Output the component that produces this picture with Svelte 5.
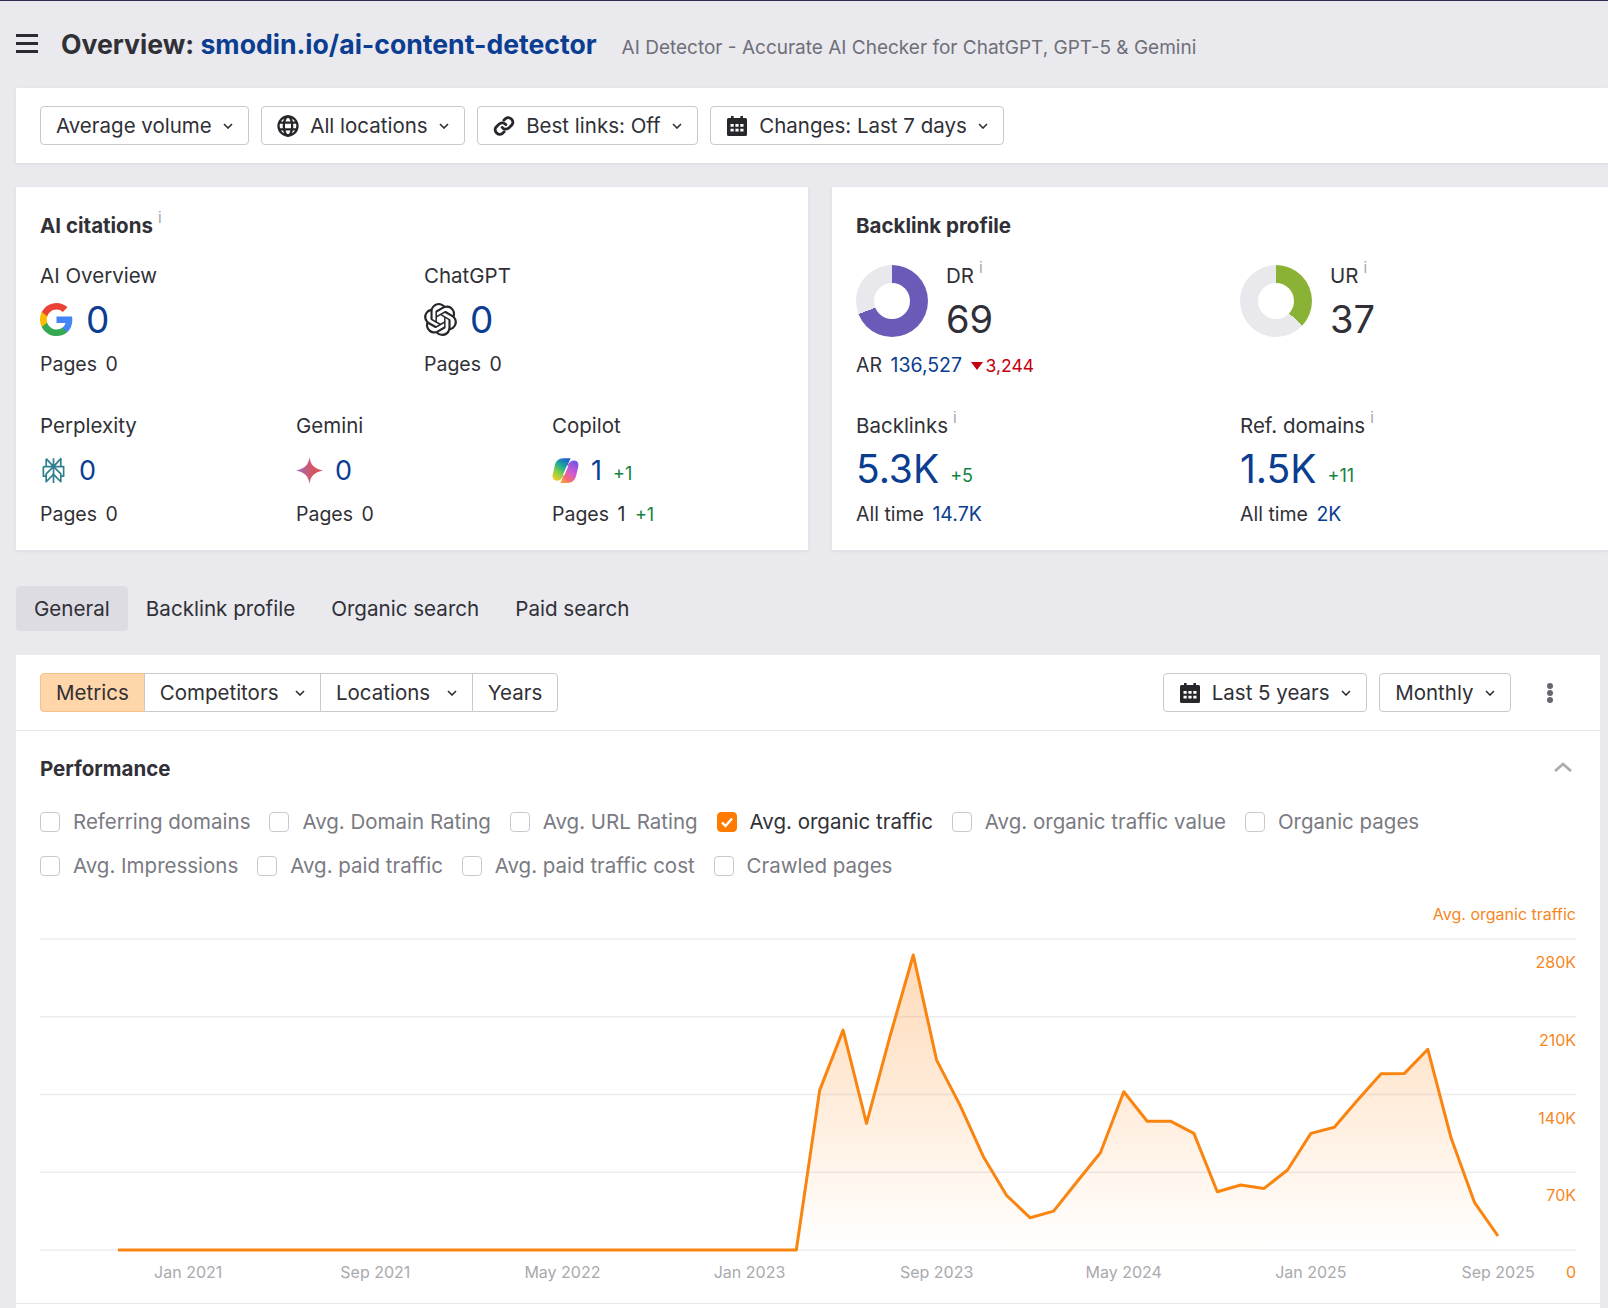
<script>
    const filters = [
        { label: 'Average volume' },
        { label: 'All locations', icon: 'globe' },
        { label: 'Best links: Off', icon: 'link' },
        { label: 'Changes: Last 7 days', icon: 'calendar' }
    ];
    const tabs = ['General', 'Backlink profile', 'Organic search', 'Paid search'];
    const segments = [
        { label: 'Metrics', active: true },
        { label: 'Competitors', menu: true },
        { label: 'Locations', menu: true },
        { label: 'Years' }
    ];
    const metrics = [
        { label: 'Referring domains' },
        { label: 'Avg. Domain Rating' },
        { label: 'Avg. URL Rating' },
        { label: 'Avg. organic traffic', checked: true },
        { label: 'Avg. organic traffic value' },
        { label: 'Organic pages' },
        { label: 'Avg. Impressions' },
        { label: 'Avg. paid traffic' },
        { label: 'Avg. paid traffic cost' },
        { label: 'Crawled pages' }
    ];

    // monthly traffic in thousands, Oct 2020 - Sep 2025
    const traffic = [
        ...Array(30).fill(0),
        144, 198, 114, 192, 265.6, 171, 130.5, 84, 48.9, 29,
        35, 61.5, 87.6, 142.5, 116, 116, 105, 52.5, 58.5, 55.5,
        72, 105, 110.5, 135, 158.7, 159, 180.7, 100.6, 42.6, 12.6
    ];
    const chartW = 1536;
    const chartH = 390;
    const baseY = 350;
    const stepY = 77.75;
    const startX = 78;
    const stepX = 23.39;
    const px = (i) => startX + i * stepX;
    const py = (v) => baseY - (v / 70) * stepY;
    const linePath = traffic.map((v, i) => `${i ? 'L' : 'M'}${px(i).toFixed(1)} ${py(v).toFixed(1)}`).join(' ');
    const areaPath = `${linePath} L${px(traffic.length - 1).toFixed(1)} ${baseY} L${startX} ${baseY} Z`;
    const ticks = [
        { v: 280, label: '280K' },
        { v: 210, label: '210K' },
        { v: 140, label: '140K' },
        { v: 70, label: '70K' }
    ];
    const months = [
        { i: 3, label: 'Jan 2021' },
        { i: 11, label: 'Sep 2021' },
        { i: 19, label: 'May 2022' },
        { i: 27, label: 'Jan 2023' },
        { i: 35, label: 'Sep 2023' },
        { i: 43, label: 'May 2024' },
        { i: 51, label: 'Jan 2025' },
        { i: 59, label: 'Sep 2025' }
    ];

    const donut = (pct) => `conic-gradient(var(--c) 0 ${pct}%, #e8e8ed ${pct}% 100%)`;
</script>

{#snippet chevron()}
    <svg class="chev" viewBox="0 0 10 6" width="10" height="6" fill="none" stroke="#303036" stroke-width="1.6">
        <path d="M1 1l4 4 4-4" />
    </svg>
{/snippet}

{#snippet calendarIcon()}
    <svg class="ico" viewBox="0 0 22 22" width="22" height="22">
        <path fill="#26262b" d="M5 1h2.600v2h6.800V1H17v2h2.500A1.500 1.500 0 0 1 21 4.500v15a1.500 1.500 0 0 1-1.500 1.500h-17A1.500 1.500 0 0 1 1 19.500v-15A1.500 1.500 0 0 1 2.500 3H5z" />
        <path fill="#fff" d="M4.500 9h3.200v2.800H4.500zM9.400 9h3.200v2.800H9.400zM14.300 9h3.200v2.800h-3.200zM4.500 13.800h3.200v2.800H4.500zM9.400 13.800h3.200v2.800H9.400zM14.300 13.800h3.200v2.800h-3.200z" />
    </svg>
{/snippet}

{#snippet globeIcon()}
    <svg class="ico" viewBox="0 0 22 22" width="22" height="22" fill="none" stroke="#26262b" stroke-width="2.300">
        <circle cx="11" cy="11" r="9.500" />
        <ellipse cx="11" cy="11" rx="4.200" ry="9.500" />
        <path d="M2 7.600h18M2 14.400h18" />
    </svg>
{/snippet}

{#snippet linkIcon()}
    <svg class="ico" viewBox="0 0 24 24" width="22" height="22" fill="none" stroke="#26262b" stroke-width="3" stroke-linecap="round">
        <path d="M10 13.500a5 5 0 0 0 7.500.5l3-3a5 5 0 0 0-7-7l-1.700 1.700" />
        <path d="M14 10.500a5 5 0 0 0-7.500-.5l-3 3a5 5 0 0 0 7 7l1.700-1.700" />
    </svg>
{/snippet}

{#snippet googleIcon()}
    <svg viewBox="1 1 22 22" width="33" height="33">
        <path fill="#4285F4" d="M22.56 12.25c0-.78-.07-1.53-.2-2.25H12v4.26h5.92c-.26 1.37-1.04 2.53-2.21 3.31v2.77h3.57c2.08-1.92 3.28-4.74 3.28-8.09z" />
        <path fill="#34A853" d="M12 23c2.97 0 5.46-.98 7.28-2.66l-3.57-2.77c-.98.66-2.23 1.06-3.71 1.06-2.86 0-5.29-1.93-6.16-4.53H2.18v2.84C3.99 20.53 7.7 23 12 23z" />
        <path fill="#FBBC05" d="M5.84 14.09c-.22-.66-.35-1.36-.35-2.09s.13-1.43.35-2.09V7.07H2.18C1.43 8.55 1 10.22 1 12s.43 3.45 1.18 4.93l2.85-2.22.81-.62z" />
        <path fill="#EA4335" d="M12 5.38c1.62 0 3.06.56 4.21 1.64l3.15-3.15C17.45 2.09 14.97 1 12 1 7.7 1 3.99 3.47 2.18 7.07l3.66 2.84c.87-2.6 3.3-4.53 6.16-4.53z" />
    </svg>
{/snippet}

{#snippet openaiIcon()}
    <svg viewBox="0 0 24 24" width="33" height="33">
        <path fill="#26262b" d="M22.2819 9.8211a5.9847 5.9847 0 0 0-.5157-4.9108 6.0462 6.0462 0 0 0-6.5098-2.9A6.0651 6.0651 0 0 0 4.9807 4.1818a5.9847 5.9847 0 0 0-3.9977 2.9 6.0462 6.0462 0 0 0 .7427 7.0966 5.98 5.98 0 0 0 .511 4.9107 6.051 6.051 0 0 0 6.5146 2.9001A5.9847 5.9847 0 0 0 13.2599 24a6.0557 6.0557 0 0 0 5.7718-4.2058 5.9894 5.9894 0 0 0 3.9977-2.9001 6.0557 6.0557 0 0 0-.7475-7.0729zm-9.022 12.6081a4.4755 4.4755 0 0 1-2.8764-1.0408l.1419-.0804 4.7783-2.7582a.7948.7948 0 0 0 .3927-.6813v-6.7369l2.02 1.1686a.071.071 0 0 1 .038.052v5.5826a4.504 4.504 0 0 1-4.4945 4.4944zm-9.6607-4.1254a4.4708 4.4708 0 0 1-.5346-3.0137l.142.0852 4.783 2.7582a.7712.7712 0 0 0 .7806 0l5.8428-3.3685v2.3324a.0804.0804 0 0 1-.0332.0615L9.74 19.9502a4.4992 4.4992 0 0 1-6.1408-1.6464zM2.3408 7.8956a4.485 4.485 0 0 1 2.3655-1.9728V11.6a.7664.7664 0 0 0 .3879.6765l5.8144 3.3543-2.0201 1.1685a.0757.0757 0 0 1-.071 0l-4.8303-2.7865A4.504 4.504 0 0 1 2.3408 7.872zm16.5963 3.8558L13.1038 8.364 15.1192 7.2a.0757.0757 0 0 1 .071 0l4.8303 2.7913a4.4944 4.4944 0 0 1-.6765 8.1042v-5.6772a.79.79 0 0 0-.407-.667zm2.0107-3.0231l-.142-.0852-4.7735-2.7818a.7759.7759 0 0 0-.7854 0L9.409 9.2297V6.8974a.0662.0662 0 0 1 .0284-.0615l4.8303-2.7866a4.4992 4.4992 0 0 1 6.6802 4.66zM8.3065 12.863l-2.02-1.1638a.0804.0804 0 0 1-.038-.0567V6.0742a4.4992 4.4992 0 0 1 7.3757-3.4537l-.142.0805L8.704 5.459a.7948.7948 0 0 0-.3927.6813zm1.0976-2.3654l2.602-1.4998 2.6069 1.4998v2.9994l-2.5974 1.4997-2.6067-1.4997Z" />
    </svg>
{/snippet}

{#snippet perplexityIcon()}
    <svg viewBox="0 0 24 24" width="27" height="27" fill="none" stroke="#2f7f8e" stroke-width="1.500" stroke-linejoin="round">
        <path d="M12 1v22M5.500 1.500L12 8.500l6.500-7v7M5.500 1.500v7M3 8.500h18v8.500h-2.500M3 8.500v8.500h2.500" />
        <path d="M12 8.500L5.500 15v7l6.500-6.500 6.500 6.500v-7z" />
    </svg>
{/snippet}

{#snippet geminiIcon()}
    <svg viewBox="0 0 24 24" width="27" height="27">
        <defs>
            <linearGradient id="gem" x1="0" y1="0" x2="1" y2="0">
                <stop offset="0" stop-color="#9a6cc4" />
                <stop offset=".55" stop-color="#d0586a" />
                <stop offset="1" stop-color="#dd5048" />
            </linearGradient>
        </defs>
        <path fill="url(#gem)" d="M12 0c.6 6.500 4.500 10.800 12 12-7.500 1.200-11.400 5.500-12 12-.6-6.500-4.500-10.800-12-12 7.500-1.200 11.400-5.500 12-12z" />
    </svg>
{/snippet}

{#snippet copilotIcon()}
    <svg viewBox="0 0 24 24" width="27" height="27">
        <defs>
            <linearGradient id="copA" x1=".75" y1="0" x2=".2" y2="1">
                <stop offset="0" stop-color="#1a5fd8" />
                <stop offset=".4" stop-color="#23b08f" />
                <stop offset=".7" stop-color="#8fd13f" />
                <stop offset="1" stop-color="#f6c92e" />
            </linearGradient>
            <linearGradient id="copB" x1=".8" y1="0" x2=".25" y2="1">
                <stop offset="0" stop-color="#6d56e6" />
                <stop offset=".5" stop-color="#d35ad0" />
                <stop offset=".8" stop-color="#f2697a" />
                <stop offset="1" stop-color="#fb9a3c" />
            </linearGradient>
        </defs>
        <path fill="url(#copA)" d="M10 1h6.500L9.500 17.500C8.500 20 6.500 21 4.500 21 1.500 21 0 18.500.6 15.500L2.500 7.500C3.300 3.500 6 1 10 1z" />
        <path fill="url(#copB)" d="M14 23H7.500L14.500 6.500C15.500 4 17.500 3 19.500 3c3 0 4.500 2.500 3.900 5.500L21.500 16.500C20.700 20.500 18 23 14 23z" />
        <path stroke="#fff" stroke-width="1.300" d="M13.800 8l-3.400 8" />
    </svg>
{/snippet}

<div class="page">
    <header class="top">
        <svg class="burger" viewBox="0 0 22 19" width="22" height="19" fill="#2a2a30">
            <rect width="22" height="3" />
            <rect y="8" width="22" height="3" />
            <rect y="16" width="22" height="3" />
        </svg>
        <div class="heading">
            <h1>Overview: <a href="#top">smodin.io/ai-content-detector</a></h1>
            <span class="sub">AI Detector - Accurate AI Checker for ChatGPT, GPT-5 &amp; Gemini</span>
        </div>
    </header>

    <section class="filters">
        {#each filters as f}
            <button class="btn">
                {#if f.icon === 'globe'}{@render globeIcon()}{/if}
                {#if f.icon === 'link'}{@render linkIcon()}{/if}
                {#if f.icon === 'calendar'}{@render calendarIcon()}{/if}
                <span>{f.label}</span>
                {@render chevron()}
            </button>
        {/each}
    </section>

    <section class="cards">
        <div class="card citations">
            <h2>AI citations<span class="info">i</span></h2>
            <div class="grid big">
                <div class="stat wide">
                    <div class="lbl">AI Overview</div>
                    <div class="val big-val">{@render googleIcon()}<b>0</b></div>
                    <div class="foot">Pages <span class="n">0</span></div>
                </div>
                <div class="stat wide">
                    <div class="lbl">ChatGPT</div>
                    <div class="val big-val">{@render openaiIcon()}<b>0</b></div>
                    <div class="foot">Pages <span class="n">0</span></div>
                </div>
            </div>
            <div class="grid small">
                <div class="stat third">
                    <div class="lbl">Perplexity</div>
                    <div class="val small-val">{@render perplexityIcon()}<b>0</b></div>
                    <div class="foot">Pages <span class="n">0</span></div>
                </div>
                <div class="stat third">
                    <div class="lbl">Gemini</div>
                    <div class="val small-val">{@render geminiIcon()}<b>0</b></div>
                    <div class="foot">Pages <span class="n">0</span></div>
                </div>
                <div class="stat third">
                    <div class="lbl">Copilot</div>
                    <div class="val small-val">{@render copilotIcon()}<b>1</b><span class="up">+1</span></div>
                    <div class="foot">Pages <span class="n">1</span> <span class="up plain">+1</span></div>
                </div>
            </div>
        </div>

        <div class="card backlinks">
            <h2>Backlink profile</h2>
            <div class="pair top-pair">
                <div class="rating-col">
                    <div class="rating">
                        <div class="donut" style="--c:#6b5ab8; background:{donut(69)}"></div>
                        <div>
                            <div class="lbl">DR<span class="info">i</span></div>
                            <div class="score">69</div>
                        </div>
                    </div>
                    <div class="foot ar">AR <a href="#top">136,527</a> <span class="tri"></span><span class="down">3,244</span></div>
                </div>
                <div class="rating-col">
                    <div class="rating">
                        <div class="donut" style="--c:#8ab235; background:{donut(37)}"></div>
                        <div>
                            <div class="lbl">UR<span class="info">i</span></div>
                            <div class="score">37</div>
                        </div>
                    </div>
                </div>
            </div>
            <div class="pair">
                <div class="stat">
                    <div class="lbl">Backlinks<span class="info">i</span></div>
                    <div class="val link-val"><b>5.3K</b><span class="up">+5</span></div>
                    <div class="foot">All time <a href="#top">14.7K</a></div>
                </div>
                <div class="stat">
                    <div class="lbl">Ref. domains<span class="info">i</span></div>
                    <div class="val link-val"><b>1.5K</b><span class="up">+11</span></div>
                    <div class="foot">All time <a href="#top">2K</a></div>
                </div>
            </div>
        </div>
    </section>

    <nav class="tabs">
        {#each tabs as t, i}
            <button class="tab" class:current={i === 0}>{t}</button>
        {/each}
    </nav>

    <section class="panel">
        <div class="panel-bar">
            <div class="segs">
                {#each segments as s}
                    <button class="seg" class:on={s.active}>
                        <span>{s.label}</span>
                        {#if s.menu}{@render chevron()}{/if}
                    </button>
                {/each}
            </div>
            <div class="bar-right">
                <button class="btn">{@render calendarIcon()}<span>Last 5 years</span>{@render chevron()}</button>
                <button class="btn"><span>Monthly</span>{@render chevron()}</button>
                <svg class="dots" viewBox="0 0 6 20" width="6" height="20" fill="#66666e">
                    <circle cx="3" cy="3" r="3" />
                    <circle cx="3" cy="10" r="3" />
                    <circle cx="3" cy="17" r="3" />
                </svg>
            </div>
        </div>

        <div class="perf">
            <div class="perf-head">
                <h2>Performance</h2>
                <svg viewBox="0 0 18 10" width="18" height="10" fill="none" stroke="#ababb0" stroke-width="2.800">
                    <path d="M1 9l8-7 8 7" />
                </svg>
            </div>
            <div class="checks">
                {#each metrics as m}
                    <label class="check" class:picked={m.checked}>
                        <span class="box">
                            {#if m.checked}
                                <svg viewBox="0 0 20 20" width="20" height="20" fill="none" stroke="#fff" stroke-width="2.400">
                                    <path d="M5 10.500l3.500 3.500L15 6.500" />
                                </svg>
                            {/if}
                        </span>
                        {m.label}
                    </label>
                {/each}
            </div>
            <svg class="chart" viewBox="0 0 {chartW} {chartH}" width={chartW} height={chartH}>
                <defs>
                    <linearGradient id="area" x1="0" y1="0" x2="0" y2="1">
                        <stop offset="0" stop-color="#ff8a1f" stop-opacity=".32" />
                        <stop offset="1" stop-color="#ff8a1f" stop-opacity="0" />
                    </linearGradient>
                </defs>
                <text class="axis-y" x={chartW} y="20">Avg. organic traffic</text>
                {#each ticks as t}
                    <line class="grid-line" x1="0" x2={chartW} y1={py(t.v)} y2={py(t.v)} />
                {/each}
                <line class="grid-line" x1="0" x2={chartW} y1={baseY} y2={baseY} />
                {#each ticks as t}
                    <text class="axis-y" x={chartW} y={py(t.v) + 29}>{t.label}</text>
                {/each}
                <path d={areaPath} fill="url(#area)" />
                <path d={linePath} fill="none" stroke="#f98510" stroke-width="3" stroke-linejoin="round" />
                {#each months as m}
                    <text class="axis-x" x={px(m.i)} y="378" text-anchor="middle">{m.label}</text>
                {/each}
                <text class="axis-y" x={chartW} y="378">0</text>
            </svg>
            <div class="foot-rule"></div>
        </div>
    </section>
</div>

<style>
    :global(body) {
        margin: 0;
        background: #e9e9ee;
    }

    .page {
        min-height: 100vh;
        box-sizing: border-box;
        border-top: 1px solid #2d2b50;
        padding-left: 16px;
        font-family: Inter, "Liberation Sans", sans-serif;
        font-size: 20.5px;
        color: #303036;
        overflow: hidden;
    }

    a {
        color: #0b3d91;
        text-decoration: none;
    }

    button {
        font: inherit;
        color: inherit;
    }

    .top {
        display: flex;
        align-items: center;
        gap: 23px;
        height: 87px;
        box-sizing: border-box;
        padding-bottom: 2px;
    }

    .burger {
        flex: none;
    }

    .heading {
        display: flex;
        align-items: baseline;
        gap: 25px;
    }

    h1 {
        margin: 0;
        font-size: 26.6px;
        font-weight: 700;
    }

    .sub {
        font-size: 19px;
        color: #6f6f78;
    }

    .filters {
        display: flex;
        gap: 12px;
        padding: 18px 24px;
        background: #fff;
        box-shadow: 0 1px 3px rgba(40, 40, 60, 0.08);
    }

    .btn {
        display: flex;
        align-items: center;
        gap: 11px;
        height: 39px;
        box-sizing: border-box;
        padding: 0 15px;
        background: #fff;
        border: 1px solid #c9c9ce;
        border-radius: 4px;
    }

    .chev {
        margin-left: 0.5px;
    }

    .ico {
        flex: none;
    }

    .cards {
        display: flex;
        gap: 24px;
        margin-top: 24px;
    }

    .card {
        box-sizing: border-box;
        height: 363px;
        padding: 25px 0 0 24px;
        background: #fff;
        box-shadow: 0 1px 3px rgba(40, 40, 60, 0.08);
    }

    .citations {
        width: 792px;
        flex: none;
    }

    .backlinks {
        flex: 1;
    }

    h2 {
        margin: 0;
        font-size: 20.5px;
        font-weight: 700;
        line-height: 28px;
    }

    .info {
        margin-left: 5px;
        font-size: 15px;
        font-weight: 400;
        line-height: 0;
        vertical-align: 10px;
        color: #a5a5aa;
    }

    .grid {
        display: grid;
        grid-template-columns: repeat(6, 128px);
    }

    .grid.big {
        margin-top: 22px;
    }

    .grid.small {
        margin-top: 34px;
    }

    .wide {
        grid-column: span 3;
    }

    .third {
        grid-column: span 2;
    }

    .lbl,
    .foot {
        line-height: 28px;
        white-space: nowrap;
    }

    .foot {
        font-size: 19.5px;
    }

    .foot .n,
    .foot a {
        margin-left: 3px;
    }

    .val {
        display: flex;
        align-items: center;
    }

    .val b {
        font-weight: 400;
        color: #0b3d91;
    }

    .big-val {
        gap: 13px;
        height: 44px;
        margin: 7px 0 9px;
        font-size: 37px;
    }

    .small-val {
        gap: 12px;
        height: 38px;
        margin: 11px 0;
        font-size: 27px;
    }

    .up {
        margin-left: -1px;
        font-size: 18px;
        color: #12823f;
        position: relative;
        top: 3px;
    }

    .up.plain {
        margin-left: 4px;
        top: 0;
    }

    .pair {
        display: grid;
        grid-template-columns: 384px 1fr;
    }

    .top-pair {
        margin-top: 22px;
    }

    .pair:not(.top-pair) {
        margin-top: 34px;
    }

    .rating {
        display: flex;
        gap: 18px;
        height: 89px;
    }

    .rating-col {
        height: 116px;
    }

    .donut {
        position: relative;
        flex: none;
        width: 72px;
        height: 72px;
        margin-top: 3px;
        border-radius: 50%;
    }

    .donut::after {
        content: "";
        position: absolute;
        inset: 18px;
        border-radius: 50%;
        background: #fff;
    }

    .score {
        margin-top: 7px;
        font-size: 38px;
        line-height: 44px;
    }

    .tri {
        display: inline-block;
        width: 0;
        height: 0;
        margin-left: 3px;
        margin-right: 3px;
        vertical-align: 2px;
        border-left: 6px solid transparent;
        border-right: 6px solid transparent;
        border-top: 8px solid #c3000d;
    }

    .down {
        font-size: 17.5px;
        color: #c3000d;
    }

    .link-val {
        gap: 13px;
        height: 38px;
        margin: 9.5px 0 12.5px;
        font-size: 39px;
    }

    .link-val .up {
        top: 7px;
        margin-left: -2px;
    }

    .tabs {
        display: flex;
        margin-top: 36px;
    }

    .tab {
        height: 45px;
        padding: 0 18px;
        font-size: 20.6px;
        background: none;
        border: 0;
        border-radius: 4px;
    }

    .tab.current {
        background: #dcdce2;
    }

    .panel {
        margin: 24px 8px 0 0;
        background: #fff;
    }

    .panel-bar {
        display: flex;
        justify-content: space-between;
        align-items: center;
        height: 75px;
        box-sizing: content-box;
        padding: 0 24px;
        border-bottom: 1px solid #e7e7ea;
    }

    .segs {
        display: flex;
    }

    .seg {
        display: flex;
        align-items: center;
        gap: 16px;
        height: 39px;
        padding: 0 15px;
        background: #fff;
        border: 1px solid #c9c9ce;
        margin-left: -1px;
    }

    .seg:first-child {
        margin-left: 0;
        border-radius: 4px 0 0 4px;
    }

    .seg:last-child {
        border-radius: 0 4px 4px 0;
    }

    .seg.on {
        background: #ffd5aa;
        border-color: #f5c089;
    }

    .bar-right {
        display: flex;
        align-items: center;
        gap: 12px;
    }

    .dots {
        margin: 0 23px 0 24px;
    }

    .perf {
        padding: 24px 24px 4px;
    }

    .perf-head {
        display: flex;
        justify-content: space-between;
        align-items: center;
    }

    .perf-head svg {
        margin: 0 4px 4px 0;
    }

    .checks {
        display: flex;
        flex-wrap: wrap;
        gap: 16px 18.9px;
        margin-top: 25px;
    }

    .check {
        display: flex;
        align-items: center;
        gap: 13px;
        line-height: 28px;
        color: #7a7a82;
    }

    .check.picked {
        color: #303036;
    }

    .box {
        flex: none;
        box-sizing: border-box;
        width: 20px;
        height: 20px;
        border: 1px solid #c9c9ce;
        border-radius: 4px;
        overflow: hidden;
    }

    .check.picked .box {
        background: #ff7a00;
        border-color: #ff7a00;
    }

    .box svg {
        display: block;
        margin: -1px;
    }

    .chart {
        display: block;
        margin-top: 20px;
    }

    .grid-line {
        stroke: #ececef;
        stroke-width: 1.5;
    }

    .axis-y {
        font-size: 16px;
        fill: #f5871f;
        text-anchor: end;
    }

    .axis-x {
        font-size: 16px;
        fill: #a9a9ae;
    }

    .foot-rule {
        height: 1px;
        margin: 13px -24px 0;
        background: #e7e7ea;
    }
</style>
